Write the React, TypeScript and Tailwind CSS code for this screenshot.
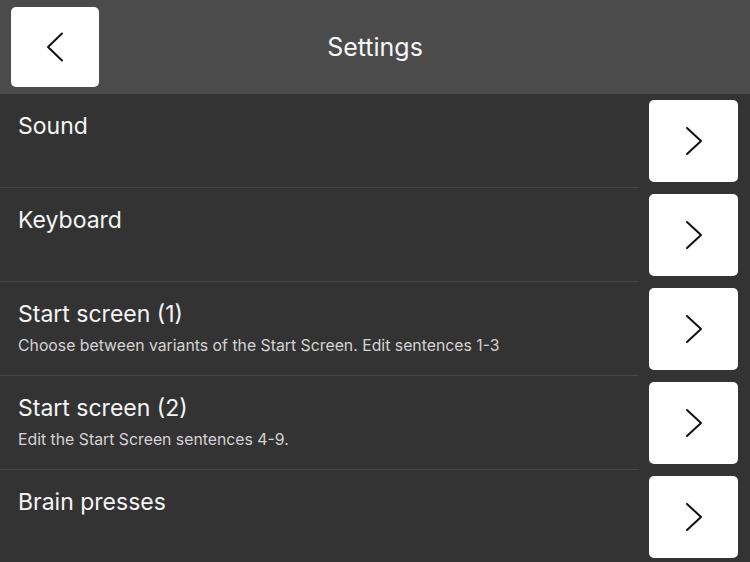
const rows = [
  { title: 'Sound', sub: '' },
  { title: 'Keyboard', sub: '' },
  { title: 'Start screen (1)', sub: 'Choose between variants of the Start Screen. Edit sentences 1-3' },
  { title: 'Start screen (2)', sub: 'Edit the Start Screen sentences 4-9.' },
  { title: 'Brain presses', sub: '' },
]

function Chevron({ dir }: { dir: 'left' | 'right' }) {
  return (
    <svg width="18" height="30" viewBox="0 0 18 30" fill="none">
      <polyline
        points={dir === 'left' ? '16,1.5 2,15 16,28.5' : '2,2 16,15 2,28'}
        stroke="#111"
        strokeWidth="2"
        strokeLinecap="round"
        strokeLinejoin="round"
      />
    </svg>
  )
}

export default function App() {
  return (
    <div
      className="flex h-[562px] w-[750px] flex-col overflow-hidden bg-[#333333] text-white"
      style={{ fontFamily: 'Inter, "Noto Sans", sans-serif' }}
    >
      {/* Header */}
      <div className="relative flex h-[94px] shrink-0 items-center justify-center bg-[#4b4b4b]">
        <button className="absolute left-[11px] top-[7px] flex h-[80px] w-[88px] items-center justify-center rounded-[5px] bg-white">
          <Chevron dir="left" />
        </button>
        <h1 className="pt-[2px] text-[25px] font-normal text-[#f7f7f7]">Settings</h1>
      </div>

      {/* Rows */}
      <div className="flex flex-col">
        {rows.map((row) => (
          <div key={row.title} className="flex h-[94px] shrink-0">
            <div className="flex-1 border-b border-[#474747] pl-[18px] pt-[18px]">
              <div className="text-[23px] leading-[28px] text-[#f5f5f5]">{row.title}</div>
              {row.sub && (
                <div className="mt-[8px] text-[15.8px] leading-[20px] text-[#d4d4d4]">{row.sub}</div>
              )}
            </div>
            <div className="flex w-[111px] items-center pb-[1px] pl-[10px]">
              <button className="flex h-[82px] w-[89px] items-center justify-center rounded-[5px] bg-white">
                <Chevron dir="right" />
              </button>
            </div>
          </div>
        ))}
      </div>
    </div>
  )
}
